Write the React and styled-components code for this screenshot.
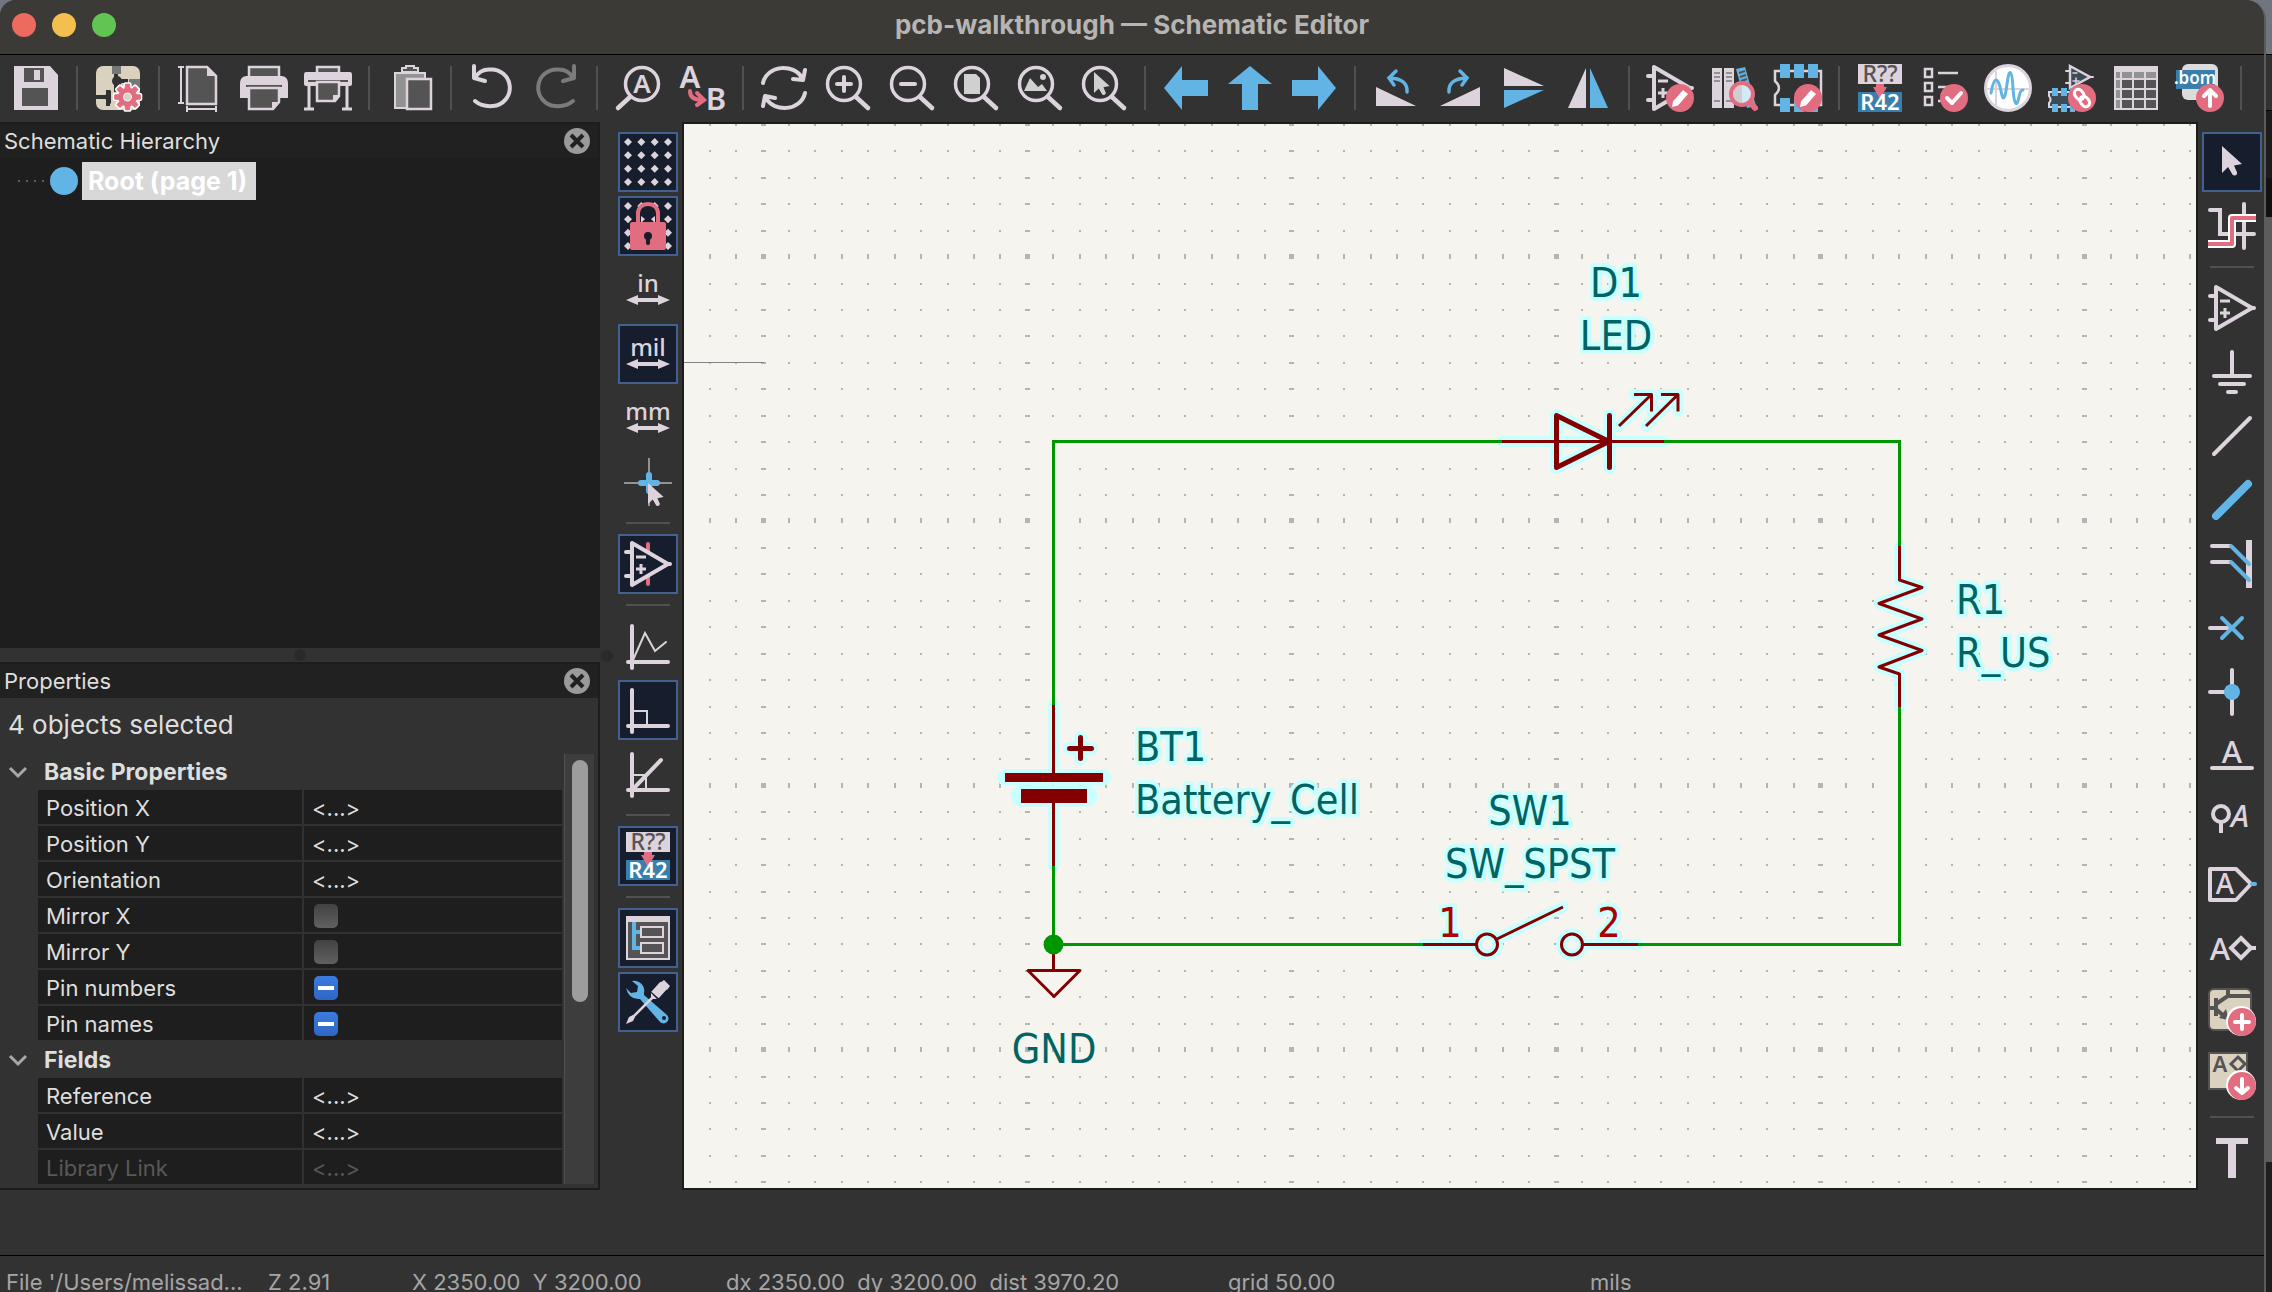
import React, { useEffect, useRef } from 'react';
import styled, { createGlobalStyle } from 'styled-components';

const L = '#dcd3dd';
const G = '#545454';
const BLUE = '#62b4e4';
const DEEP = '#397fae';
const PINK = '#e26d80';
const CREAM = '#dad1bf';
const DARK = '#323232';

const GlobalStyle = createGlobalStyle`
  * { box-sizing: border-box; }
  body { margin: 0; background: #222; overflow: hidden; }
  button { font: inherit; color: inherit; }
`;

const Desktop = styled.div`
  display: flex;
  height: 100vh;
  font-family: Inter, "Liberation Sans", sans-serif;
  background: linear-gradient(#70757f 0 54px, #000 54px 55px, #323232 55px 110px, #000 110px 111px,
    #1c1c1c 111px 178px, #111 178px 217px, #5c5c5c 217px 1162px, #1f1f1f 1162px);
`;

const Window = styled.div`
  flex: 1;
  min-width: 0;
  display: flex;
  flex-direction: column;
  margin-right: 6px;
  border-right: 2px solid #5b5b5a;
  border-radius: 16px 20px 0 0;
  background: #323232;
  overflow: hidden;
`;

const TitleBar = styled.header`
  flex: none;
  display: grid;
  grid-template-columns: 1fr auto 1fr;
  align-items: center;
  height: 55px;
  padding: 0 12px 4px;
  background: #3b3a37;
  border-bottom: 1px solid #000;
`;

const Lights = styled.div`
  display: flex;
  gap: 16px;
`;

const Light = styled.button`
  width: 24px;
  height: 24px;
  padding: 0;
  border: 0;
  border-radius: 50%;
  background: ${(p) => p.$color};
`;

const Title = styled.h1`
  margin: 0;
  font-size: 26px;
  line-height: 32px;
  font-weight: 700;
  color: #b6b5b4;
`;

const TopToolbar = styled.nav`
  flex: none;
  display: flex;
  align-items: center;
  height: 67px;
  padding: 0 0 1px 4px;
  overflow: hidden;
`;

const TopButton = styled.button`
  flex: none;
  display: flex;
  align-items: center;
  justify-content: center;
  width: 64px;
  height: 60px;
  padding: 0;
  border: 0;
  background: none;
`;

const TopDivider = styled.span`
  flex: none;
  width: 2px;
  height: 44px;
  margin: 0 8px;
  background: #505050;
`;

const Main = styled.main`
  flex: 1;
  min-height: 0;
  display: grid;
  grid-template-columns: 600px 14px 68px minmax(0, 1fr) 66px;
  margin-bottom: 65px;
`;

const SidePanels = styled.aside`
  display: flex;
  flex-direction: column;
  min-height: 0;
`;

const Sash = styled.div`
  flex: 0 0 14px;
  display: flex;
  align-items: center;
  justify-content: center;
  &::after {
    content: '';
    width: 12px;
    height: 12px;
    border-radius: 50%;
    background: #2a2a2a;
  }
`;

const Panel = styled.section`
  flex: 1 1 0;
  min-height: 0;
  display: flex;
  flex-direction: column;
  border: solid #1d1d1d;
  border-width: 2px 2px ${(p) => (p.$footed ? '2px' : '0')} 0;
  background: ${(p) => p.$bg};
`;

const PanelHeader = styled.div`
  flex: none;
  display: flex;
  align-items: center;
  justify-content: space-between;
  height: 34px;
  padding: 0 7px 0 4px;
  background: #212121;
`;

const PanelTitle = styled.h2`
  margin: 0;
  font-size: 22px;
  line-height: 28px;
  font-weight: 400;
  color: #dedede;
`;

const CloseButton = styled.button`
  display: flex;
  padding: 0;
  border: 0;
  background: none;
`;

const Tree = styled.ul`
  margin: 0;
  padding: 4px 0 0 18px;
  list-style: none;
`;

const TreeItem = styled.li`
  display: flex;
  align-items: center;
  height: 38px;
`;

const TreeDots = styled.span`
  width: 26px;
  height: 2px;
  margin-right: 6px;
  background: repeating-linear-gradient(90deg, #5c5c5c 0 2px, transparent 2px 8px);
`;

const SheetDot = styled.span`
  width: 28px;
  height: 28px;
  margin-right: 4px;
  border-radius: 50%;
  background: ${BLUE};
`;

const TreeLabel = styled.span`
  padding: 0 9px 0 6px;
  font-size: 25px;
  line-height: 38px;
  font-weight: 700;
  color: #fff;
  background: #d8d8d8;
`;

const Selection = styled.p`
  flex: none;
  height: 56px;
  margin: 0;
  padding-left: 8px;
  font-size: 26px;
  line-height: 54px;
  color: #dedede;
`;

const GridArea = styled.div`
  flex: 1;
  min-height: 0;
  display: flex;
  margin: 0 4px 4px 0;
  overflow: hidden;
`;

const GridClip = styled.div`
  flex: 1;
  min-width: 0;
  overflow: hidden;
`;

const PropTable = styled.table`
  width: 100%;
  border-collapse: separate;
  border-spacing: 0;
  table-layout: fixed;
  font-size: 22px;
  line-height: 32px;
  color: #dedede;
`;

const GroupCell = styled.th`
  height: 36px;
  padding: 0 0 0 6px;
  text-align: left;
  font-size: 23px;
  font-weight: 700;
`;

const GroupToggle = styled.button`
  display: flex;
  align-items: center;
  gap: 14px;
  height: 36px;
  padding: 0;
  border: 0;
  background: none;
`;

const Gutter = styled.td`
  width: 38px;
  padding: 0;
`;

const NameCell = styled.th`
  width: 266px;
  height: 36px;
  padding: 2px 0 0 8px;
  text-align: left;
  font-weight: 400;
  color: ${(p) => (p.$dim ? '#585858' : '#dedede')};
  background: #1e1e1e;
  border-right: 2px solid #313131;
  border-bottom: 2px solid #313131;
`;

const ValueCell = styled.td`
  padding: 2px 0 0 8px;
  color: ${(p) => (p.$dim ? '#585858' : '#dedede')};
  background: #1e1e1e;
  border-bottom: 2px solid #313131;
`;

const CheckBox = styled.input`
  appearance: none;
  display: block;
  width: 24px;
  height: 24px;
  margin: 0 0 0 2px;
  border-radius: 5px;
  background: linear-gradient(#424242, #606060);
  &:indeterminate {
    background:
      linear-gradient(#fff, #fff) center / 16px 4px no-repeat,
      linear-gradient(#3c7be0, #2e66c4);
  }
`;

const ScrollTrack = styled.div`
  width: 30px;
  margin-left: 2px;
  padding: 6px 6px 0 7px;
  background: #3d3d3d;
  border-left: 1px solid #505050;
`;

const ScrollThumb = styled.div`
  width: 16px;
  height: 57%;
  border-radius: 8px;
  background: #9d9d9d;
`;

const SideToolbar = styled.nav`
  display: flex;
  flex-direction: column;
  align-items: flex-start;
  padding: 8px 0 0 2px;
`;

const SideButton = styled.button`
  flex: none;
  display: flex;
  align-items: center;
  justify-content: center;
  width: 60px;
  height: 60px;
  margin: 2px;
  padding: 0;
  border: 2px solid ${(p) => (p['aria-pressed'] ? '#436190' : 'transparent')};
  background: ${(p) => (p['aria-pressed'] ? '#161e2d' : 'none')};
`;

const SideDivider = styled.span`
  flex: none;
  width: 44px;
  height: 2px;
  margin: 8px 10px;
  background: #505050;
`;

const Canvas = styled.div`
  min-width: 0;
  min-height: 0;
  border: 2px solid #1c1c1b;
  background: #f5f4ef;
  overflow: hidden;
`;

const Drawing = styled.svg`
  display: block;
  width: 100%;
  height: 100%;
`;

const Field = styled.text`
  font-family: "DejaVu Sans Condensed", "DejaVu Sans", sans-serif;
  font-size: 41px;
  fill: ${(p) => p.$fill || '#006464'};
  text-anchor: ${(p) => p.$anchor || 'middle'};
  stroke: ${(p) => (p.$plain ? 'none' : '#c8ffff')};
  stroke-width: 8px;
  stroke-linejoin: round;
  paint-order: stroke;
`;

const StatusBar = styled.footer`
  flex: none;
  display: grid;
  grid-template-columns: 262px 144px 314px 502px 362px 1fr;
  height: 37px;
  padding: 16px 0 0 6px;
  border-top: 1px solid #000;
  font-size: 22px;
  line-height: 20px;
  color: #a5a5a5;
  white-space: pre;
`;

const StatusField = styled.div`
  height: 20px;
`;

const IconSvg = styled.svg`
  overflow: visible;
`;

const IconText = styled.text`
  font-family: "Noto Sans", sans-serif;
  font-size: ${(p) => p.$size}px;
  font-weight: ${(p) => p.$weight || 400};
  font-style: ${(p) => (p.$italic ? 'italic' : 'normal')};
  text-anchor: middle;
  fill: ${(p) => p.$fill || L};
`;

/* ---------- icons, all on a 48 px grid ---------- */

const Icon = ({ children }) => (
  <IconSvg width="48" height="48" viewBox="0 0 48 48" fill="none" strokeLinecap="round" aria-hidden="true">
    {children}
  </IconSvg>
);

const Badge = ({ children, y = 34, ring }) => (
  <>
    {ring && <circle cx="33" cy={y - 1} r="15" fill="#fff" />}
    <circle cx="34" cy={y} r="14" fill={PINK} />
    <g transform={`translate(34 ${y})`} stroke="#fff" strokeWidth="4" strokeLinejoin="round">
      {children}
    </g>
  </>
);

const Pencil = () => <path d="M-7 3.500L3 -8L8 -4L-2 7.500L-8 9Z" fill="#fff" stroke="none" />;

const OpAmp = ({ fill = 'none' }) => (
  <>
    <path d="M8 3V45L44 24Z" stroke={L} strokeWidth="4" strokeLinejoin="round" fill={fill} />
    <path d="M2 12H7M2 36H7M42 24H46" stroke={L} strokeWidth="4" />
    <path d="M12 17H22M12 29H22M17 24V34" stroke={L} strokeWidth="3" strokeLinecap="butt" />
  </>
);

const Lens = ({ children }) => (
  <>
    <circle cx="20" cy="20" r="16.500" stroke={L} strokeWidth="3.500" />
    <path d="M32 33L44 44" stroke={L} strokeWidth="4.500" />
    {children}
  </>
);

const Pointer = ({ x, y, fill = L, s = 1 }) => (
  <g transform={`translate(${x} ${y}) scale(${s})`}>
    <path d="M0 0V27L6 21L11 29L15 27L12 19.500L20 18Z" fill={fill} />
    <path d="M9 20L12.500 27" stroke={fill} strokeWidth="5" />
  </g>
);

const Annotate = () => (
  <>
    <path d="M2 0H46V20H2Z" fill={L} />
    <path d="M2 28H46V48H2Z" fill={DEEP} />
    <IconText x="24" y="18" $size={23} $weight={500} $fill={G}>R??</IconText>
    <path d="M20 20H28V23H31L24 35L17 23H20Z" fill={PINK} />
    <IconText x="24" y="46" $size={22} $weight={600} $fill="#fff">R42</IconText>
  </>
);

const GridDots = () => {
  const at = [4, 17.3, 30.7, 44];
  return at.map((y) => at.map((x) => <path key={`${x}-${y}`} d={`M${x - 4} ${y}l4 -4l4 4l-4 4z`} fill={L} />));
};

const Units = ({ children }) => (
  <>
    <IconText x="24" y="26" $size={24} $weight={500}>{children}</IconText>
    <path d="M2 34L14 29V32H34V29L46 34L34 39V36H14V39Z" fill={L} />
  </>
);

const Axes = ({ children }) => (
  <>
    {children}
    <path d="M8 4V46M4 40H44" stroke={L} strokeWidth="4" />
  </>
);

const gearPath = (() => {
  const pts = [];
  for (let i = 0; i < 8; i += 1) {
    [[-0.27, 9], [-0.16, 13], [0.16, 13], [0.27, 9]].forEach(([o, r]) => {
      const a = (i * Math.PI) / 4 + o;
      pts.push(`${(33.5 + r * Math.sin(a)).toFixed(2)} ${(33 - r * Math.cos(a)).toFixed(2)}`);
    });
  }
  return `M${pts.join('L')}Z`;
})();

const icons = {
  save: (
    <>
      <path d="M2 2H38L46 11V46H2Z" fill={L} />
      <path d="M12 4H32V18H12ZM10 24H36V42H10Z" fill={G} />
      <path d="M22 6H28V16H22Z" fill={L} />
    </>
  ),
  setup: (
    <>
      <rect x="2" y="2" width="44" height="44" rx="7" fill={CREAM} />
      <path d="M18 2H27V10H18ZM35 15H46V24H35Z" fill="#777" />
      <circle cx="23" cy="17" r="5" fill={DARK} />
      <path d="M22 10V28M23 17H34M2 33H12M14 26V42" stroke={DARK} strokeWidth="4" strokeLinecap="butt" />
      <path d="M9 33L17 26V40Z" fill={DARK} />
      <path d={gearPath} fill={PINK} stroke="#fff" strokeWidth="4" strokeLinejoin="round" />
      <path d={gearPath} fill={PINK} stroke={PINK} strokeWidth="1" strokeLinejoin="round" />
      <circle cx="33.500" cy="33" r="4" fill={CREAM} stroke="#fff" strokeWidth="1" />
    </>
  ),
  page: (
    <>
      <path d="M11 3H31L40 12V40H11Z" fill={G} stroke={L} strokeWidth="2.500" />
      <path d="M31 2V12H41Z" fill={L} />
      <path d="M5 3V39M2 3H8M2 39H8M11 45H40M11 42V48M40 42V48" stroke={L} strokeWidth="2" strokeLinecap="butt" />
    </>
  ),
  print: (
    <>
      <path d="M9 14V3H39V14" fill={G} stroke={L} strokeWidth="2.500" />
      <path d="M6 12H42Q48 13 48 19V34H40V22H8V34H0V19Q0 13 6 12Z" fill={L} />
      <path d="M6 22H42" stroke={G} strokeWidth="2" strokeLinecap="butt" />
      <path d="M9 24V45H33L39 38V24Z" fill={G} stroke={L} strokeWidth="2.500" />
      <path d="M32 46V38H40Z" fill={L} />
    </>
  ),
  plot: (
    <>
      <path d="M13 9V3H35V9" fill={G} stroke={L} strokeWidth="2.500" />
      <path d="M2 8H46Q48 8 48 11V20Q48 22 46 22H2Q0 22 0 20V11Q0 8 2 8Z" fill={L} />
      <path d="M4 17H44" stroke={G} strokeWidth="2" strokeLinecap="butt" />
      <path d="M13 18V37H31L35 32V18Z" fill={G} stroke={L} strokeWidth="2.500" />
      <path d="M29 38V31H36Z" fill={L} />
      <path d="M5 22V45M43 22V45M0 45H10M38 45H48" stroke={L} strokeWidth="3" strokeLinecap="butt" />
    </>
  ),
  paste: (
    <>
      <path d="M9 9H39V44H9Z" fill="#929292" stroke={L} strokeWidth="2" />
      <path d="M16 8V4H20V2H28V4H32V8Z" fill={G} stroke={L} strokeWidth="2" />
      <path d="M21 15H45V45H21Z" fill={G} stroke={L} strokeWidth="2.500" />
    </>
  ),
  undo: <path d="M6 2V14L17 17M7 14Q12 5 22 5.500A18 18 0 0 1 25 42Q14 43 7 37" stroke={L} strokeWidth="4" strokeLinejoin="round" />,
  redo: <path d="M42 2V14L31 17M41 14Q36 5 26 5.500A18 18 0 0 0 23 42Q34 43 41 37" stroke="#7c7b7c" strokeWidth="4" strokeLinejoin="round" />,
  find: (
    <>
      <circle cx="28" cy="20" r="16.500" stroke={L} strokeWidth="3.500" />
      <path d="M16 33L4 44" stroke={L} strokeWidth="4.500" />
      <IconText x="28" y="29" $size={26} $weight={600}>A</IconText>
    </>
  ),
  replace: (
    <>
      <IconText x="12" y="24" $size={31} $weight={600}>A</IconText>
      <IconText x="38" y="46" $size={31} $weight={600}>B</IconText>
      <path d="M12 27Q12 36 24 36M19 29L26 36L19 41" stroke={PINK} strokeWidth="4" />
    </>
  ),
  refresh: <path d="M3 19C7 1 34 -1 42 14M45 6L43 16L33 15M45 29C41 47 14 49 6 34M3 42L5 32L15 34" stroke={L} strokeWidth="4" strokeLinejoin="round" />,
  zoomIn: <Lens><path d="M13 20H27M20 13V27" stroke={L} strokeWidth="4" /></Lens>,
  zoomOut: <Lens><path d="M13 20H27" stroke={L} strokeWidth="4" /></Lens>,
  zoomPage: <Lens><path d="M12 10H24L28 14V30H12Z" fill="#d0d0d0" /></Lens>,
  zoomObjects: <Lens><path d="M8 27L14 14L22 23L26 20L31 27Z" fill="#d0d0d0" /><circle cx="27" cy="13" r="3" fill="#d0d0d0" /></Lens>,
  zoomSelect: <Lens><Pointer x={14} y={8} s={0.78} fill="#d0d0d0" /></Lens>,
  back: <path d="M2 24L20 2V16H46V32H20V46Z" fill={BLUE} />,
  up: <path d="M24 2L46 20H32V46H16V20H2Z" fill={BLUE} />,
  forward: <path d="M46 24L28 2V16H2V32H28V46Z" fill={BLUE} />,
  ccw: <><path d="M4 23V42H44Z" fill={L} /><path d="M35 28Q36 15 18 14M24 7L17 14L22 21" stroke={BLUE} strokeWidth="3.500" /></>,
  cw: <><path d="M44 23V42H4Z" fill={L} /><path d="M13 28Q12 15 30 14M24 7L31 14L26 21" stroke={BLUE} strokeWidth="3.500" /></>,
  mirrorV: <><path d="M4 4V22H44Z" fill={L} /><path d="M4 26H44L4 44Z" fill={BLUE} /></>,
  mirrorH: <><path d="M22 4V44H4Z" fill={L} /><path d="M26 4V44H44Z" fill={BLUE} /></>,
  symbolEdit: <><OpAmp /><Badge><Pencil /></Badge></>,
  library: (
    <>
      <path d="M2 4H12V44H2ZM14 4H24V44H14Z" fill={L} />
      <path d="M4 9H10M4 13H10M4 17H10M4 37H10M16 9H22M16 13H22M16 17H22M16 37H22" stroke="#929292" strokeWidth="2" strokeLinecap="butt" />
      <path d="M26 5L35 3L46 42L37 44Z" fill={BLUE} />
      <path d="M29 9L35 7M30 13L36 11M31 17L37 15" stroke={G} strokeWidth="2" strokeLinecap="butt" />
      <circle cx="32" cy="30" r="11" fill="#d4e9f5" stroke={PINK} strokeWidth="4" />
      <path d="M23 30A9 9 0 0 0 32 39V21A9 9 0 0 0 23 30Z" fill="#d0cdd0" />
      <path d="M41 39L45 44" stroke={PINK} strokeWidth="6" />
    </>
  ),
  footprintEdit: (
    <>
      <path d="M1 7H47V41H1V31Q9 24 1 17Z" stroke={L} strokeWidth="2.500" />
      <path d="M6 0H16V14H6ZM20 0H30V14H20ZM34 0H44V14H34ZM6 34H16V48H6ZM20 34H30V48H20ZM34 34H44V48H34Z" fill={BLUE} />
      <Badge><Pencil /></Badge>
    </>
  ),
  annotate: <Annotate />,
  erc: (
    <>
      <path d="M5 5H12V13H5ZM5 19H12V27H5ZM5 33H12V41H5ZM18 9H38M18 23H30M18 37H24" stroke={L} strokeWidth="2.500" strokeLinecap="butt" />
      <Badge><path d="M-7 0L-2 5L7 -5" /></Badge>
    </>
  ),
  simulate: (
    <>
      <circle cx="24" cy="24" r="22.500" fill="#fff" stroke={L} strokeWidth="3" />
      <path d="M4 25H44M12 8V42" stroke={L} strokeWidth="2" />
      <path d="M7 29C10 12 14 12 17 27C19 38 21 36 23 20C25 4 28 4 29 24C30 41 33 44 35 33C36 27 38 26 39 26" stroke={BLUE} strokeWidth="3" />
    </>
  ),
  assign: (
    <>
      <path d="M22 2V24L42 13Z" fill="#3d4a57" stroke={L} strokeWidth="2.500" />
      <path d="M18 7H22M18 19H22M41 13H45" stroke={L} strokeWidth="2" />
      <path d="M25 9H29M25 17H31M28 14V20" stroke={L} strokeWidth="1.500" />
      <path d="M1 28H28V43H1V39Q4 36 1 32Z" fill="#3d4a57" stroke={L} strokeWidth="2" />
      <path d="M4 24H10V32H4ZM13 24H19V32H13ZM22 24H27V32H22ZM4 40H10V48H4ZM13 40H19V48H13ZM22 40H27V48H22Z" fill={BLUE} />
      <Badge>
        <g strokeWidth="3" transform="rotate(52)">
          <rect x="-10" y="-4" width="11" height="8" rx="4" />
          <rect x="-1" y="-4" width="11" height="8" rx="4" />
        </g>
      </Badge>
    </>
  ),
  table: (
    <>
      <path d="M2 2H46V46H2Z" fill={L} />
      <path d="M4 8H8V14H4ZM10 8H20V14H10ZM22 8H32V14H22ZM34 8H44V14H34ZM4 16H8V24H4ZM4 26H8V34H4ZM4 36H8V44H4Z" fill="#929292" />
      <path d="M10 16H20V24H10ZM22 16H32V24H22ZM34 16H44V24H34ZM10 26H20V34H10ZM22 26H32V34H22ZM34 26H44V34H34ZM10 36H20V44H10ZM22 36H32V44H22ZM34 36H44V44H34Z" fill={G} />
    </>
  ),
  bom: (
    <>
      <rect x="6" y="0" width="36" height="36" rx="6" fill="#dcdcdc" />
      <path d="M0 6H39V25H0Z" fill={DEEP} />
      <IconText x="19" y="20" $size={17} $weight={600} $fill="#fff">.bom</IconText>
      <Badge><path d="M0 8V-8M-6 -2L0 -8L6 -2" /></Badge>
    </>
  ),
  grid: <GridDots />,
  lock: (
    <>
      <GridDots />
      <path d="M14 20V11A10 10 0 0 1 34 11V20Z" fill="#161e2d" />
      <path d="M17 14l4 3l-4 4zM31 14l-4 3l4 4z" fill={L} />
      <path d="M14 21V11A10 9 0 0 1 34 11V21" stroke={PINK} strokeWidth="4" />
      <rect x="6" y="20" width="36" height="28" rx="2" fill={PINK} />
      <circle cx="24" cy="34" r="4" fill="#161e2d" />
      <path d="M24 34V41" stroke="#161e2d" strokeWidth="4" />
    </>
  ),
  inch: <Units>in</Units>,
  mil: <Units>mil</Units>,
  mm: <Units>mm</Units>,
  cursor: (
    <>
      <path d="M0 25H48M25 0V48" stroke="#929292" strokeWidth="2" strokeLinecap="butt" />
      <path d="M17 25H33M25 17V33" stroke={BLUE} strokeWidth="6" />
      <Pointer x={24} y={25} s={0.78} />
    </>
  ),
  hiddenPins: <><path d="M24 4V44" stroke={PINK} strokeWidth="4" /><path d="M8 3V45L44 24Z" fill="#161e2d" /><OpAmp /></>,
  freeAngle: <Axes><path d="M9 38L21 11L31 29L42 20" stroke={L} strokeWidth="2" /></Axes>,
  rightAngle: <Axes><path d="M10 25H23V39" stroke={L} strokeWidth="2" /></Axes>,
  halfAngle: <Axes><path d="M10 25H22V39" stroke={L} strokeWidth="2" /><path d="M10 38L37 10" stroke={L} strokeWidth="4" /></Axes>,
  hierarchy: (
    <>
      <path d="M3 3H45V45H3Z" fill={G} stroke={L} strokeWidth="2" />
      <path d="M2 2H46V8H2Z" fill={L} />
      <path d="M10 8V34H16M10 18H16" stroke={BLUE} strokeWidth="4" strokeLinecap="butt" />
      <path d="M17 13H39V23H17ZM17 29H39V39H17Z" stroke={L} strokeWidth="2" />
    </>
  ),
  tools: (
    <>
      <path d="M8 3A10 10 0 0 1 20 15L20 17L43 37A4 4 0 0 1 36 44L16 21Q5 22 2 10L7 15L13 14L14 8Z" fill={BLUE} />
      <circle cx="40" cy="40" r="2" fill="#161e2d" />
      <path d="M6 42L28 20" stroke={L} strokeWidth="2.500" />
      <path d="M2 46L5 39L9 37L11 39L9 43Z" fill={L} />
      <path d="M31 17L40 7" stroke={L} strokeWidth="10" strokeLinecap="butt" />
      <path d="M36 5L40 2L46 8L43 12ZM27 15L33 21L27 21Z" fill={L} />
    </>
  ),
  select: <Pointer x={14} y={8} />,
  highlight: (
    <>
      <path d="M2 8H12V32H46M36 2V46" stroke={L} strokeWidth="4" />
      <path d="M0 42H24V16H48" stroke="#fff" strokeWidth="8" strokeLinecap="butt" strokeLinejoin="round" />
      <path d="M0 42H24V16H48" stroke={PINK} strokeWidth="4" strokeLinecap="butt" strokeLinejoin="round" />
    </>
  ),
  symbol: <OpAmp />,
  power: <path d="M24 4V28M6 28H42M12 36H36M20 44H28" stroke={L} strokeWidth="4" />,
  wire: <path d="M42 6L6 42" stroke={L} strokeWidth="4" />,
  bus: <path d="M40 8L8 40" stroke={BLUE} strokeWidth="8" />,
  busEntry: (
    <>
      <path d="M4 6H22M4 22H22" stroke={L} strokeWidth="4" />
      <path d="M38 0H44V48H38Z" fill={L} />
      <path d="M23 6L41 24M23 22L41 40" stroke={BLUE} strokeWidth="4" />
    </>
  ),
  noConnect: <><path d="M2 24H24" stroke={L} strokeWidth="4" /><path d="M14 14L34 34M34 14L14 34" stroke={BLUE} strokeWidth="4" /></>,
  junction: <><path d="M2 24H24M24 2V46" stroke={L} strokeWidth="4" /><circle cx="24" cy="24" r="8" fill={BLUE} /></>,
  label: <><IconText x="24" y="31" $size={31} $weight={500}>A</IconText><path d="M4 36H44" stroke={L} strokeWidth="4" /></>,
  netClass: <><circle cx="13" cy="18" r="8" stroke={L} strokeWidth="4" /><path d="M13 26V37" stroke={L} strokeWidth="4" strokeLinecap="butt" /><IconText x="32" y="31" $size={31} $weight={500} $italic>A</IconText></>,
  globalLabel: (
    <>
      <path d="M2 9H28L43 24L28 40H2Z" stroke={L} strokeWidth="4" strokeLinejoin="round" />
      <IconText x="17" y="34" $size={28} $weight={500}>A</IconText>
      <path d="M44 24H47" stroke={BLUE} strokeWidth="4" />
    </>
  ),
  hierLabel: <><IconText x="12" y="36" $size={31} $weight={500}>A</IconText><path d="M33 14L43 24L33 34L23 24Z M43 24H48" stroke={L} strokeWidth="4" strokeLinecap="butt" /></>,
  sheet: (
    <>
      <rect x="1" y="1" width="42" height="41" rx="5" fill={CREAM} stroke={G} strokeWidth="2" />
      <path d="M0 20H8M8 10V28M8 16L20 8V2M20 8H42M9 22L18 30" stroke={G} strokeWidth="4" strokeLinecap="butt" />
      <path d="M11 30L21 32L18 21Z" fill={G} />
      <Badge ring><path d="M-7 0H7M0 -7V7" /></Badge>
    </>
  ),
  importPin: (
    <>
      <path d="M1 1H39V37H1Z" fill={CREAM} stroke={G} strokeWidth="2" />
      <IconText x="12" y="20" $size={22} $weight={600} $fill={G}>A</IconText>
      <path d="M30 5L37 12L30 19L23 12Z" stroke={G} strokeWidth="3" />
      <Badge ring><path d="M0 -7V7M-6 2L0 7L6 2" /></Badge>
    </>
  ),
  text: <path d="M8 4H40V10H28V44H20V10H8Z" fill={L} />,
};

const topTools = [
  ['save', 'Save'], null, ['setup', 'Schematic setup'], null,
  ['page', 'Page settings'], ['print', 'Print'], ['plot', 'Plot'], null, ['paste', 'Paste'], null,
  ['undo', 'Undo'], ['redo', 'Redo'], null, ['find', 'Find'], ['replace', 'Find and replace'], null,
  ['refresh', 'Refresh'], ['zoomIn', 'Zoom in'], ['zoomOut', 'Zoom out'], ['zoomPage', 'Zoom to page'],
  ['zoomObjects', 'Zoom to objects'], ['zoomSelect', 'Zoom to selection'], null,
  ['back', 'Back'], ['up', 'Up'], ['forward', 'Forward'], null,
  ['ccw', 'Rotate counterclockwise'], ['cw', 'Rotate clockwise'], ['mirrorV', 'Mirror vertically'], ['mirrorH', 'Mirror horizontally'], null,
  ['symbolEdit', 'Symbol editor'], ['library', 'Symbol libraries'], ['footprintEdit', 'Footprint editor'], null,
  ['annotate', 'Annotate'], ['erc', 'Rules check'], ['simulate', 'Simulator'], ['assign', 'Assign footprints'],
  ['table', 'Edit fields'], ['bom', 'Bill of materials'], null,
];

const leftTools = [
  ['grid', 'Show grid', true], ['lock', 'Grid overrides', true], ['inch', 'Inches'], ['mil', 'Mils', true],
  ['mm', 'Millimeters'], ['cursor', 'Full-window crosshairs'], null, ['hiddenPins', 'Show hidden pins', true], null,
  ['freeAngle', 'Free angle'], ['rightAngle', 'Right angle', true], ['halfAngle', '45 degree angle'], null,
  ['annotate', 'Annotate automatically', true], null, ['hierarchy', 'Hierarchy navigator', true], ['tools', 'Properties manager', true],
];

const rightTools = [
  ['select', 'Select', true], ['highlight', 'Highlight net'], null, ['symbol', 'Add symbol'], ['power', 'Add power'],
  ['wire', 'Add wire'], ['bus', 'Add bus'], ['busEntry', 'Add bus entry'], ['noConnect', 'Add no-connect'],
  ['junction', 'Add junction'], ['label', 'Add label'], ['netClass', 'Add net class'], ['globalLabel', 'Add global label'],
  ['hierLabel', 'Add hierarchical label'], ['sheet', 'Add sheet'], ['importPin', 'Import sheet pin'], null, ['text', 'Add text'],
];

const SideTools = ({ tools, label }) => (
  <SideToolbar aria-label={label}>
    {tools.map((t, i) =>
      t ? (
        <SideButton key={t[0]} type="button" aria-label={t[1]} aria-pressed={Boolean(t[2])}>
          <Icon>{icons[t[0]]}</Icon>
        </SideButton>
      ) : (
        <SideDivider key={`d${i}`} />
      ),
    )}
  </SideToolbar>
);

const Close = ({ label }) => (
  <CloseButton type="button" aria-label={label}>
    <svg width="28" height="28" viewBox="0 0 28 28" aria-hidden="true">
      <circle cx="14" cy="14" r="13" fill="#9a9a9a" />
      <path d="M8 8L20 20M20 8L8 20" stroke="#212121" strokeWidth="4" />
    </svg>
  </CloseButton>
);

const Check = ({ mixed, id }) => {
  const ref = useRef(null);
  useEffect(() => {
    ref.current.indeterminate = Boolean(mixed);
  }, [mixed]);
  return <CheckBox ref={ref} id={id} type="checkbox" />;
};

const groups = [
  {
    name: 'Basic Properties',
    rows: [
      ['Position X'], ['Position Y'], ['Orientation'], ['Mirror X', 'off'], ['Mirror Y', 'off'],
      ['Pin numbers', 'mixed'], ['Pin names', 'mixed'],
    ],
  },
  { name: 'Fields', rows: [['Reference'], ['Value'], ['Library Link', 'dim']] },
];

const NameCol = styled.col`
  width: ${(p) => p.$w};
`;

const Properties = () => (
  <PropTable>
    <colgroup>
      <NameCol $w="38px" />
      <NameCol $w="266px" />
      <NameCol $w="auto" />
    </colgroup>
    {groups.map((g) => (
      <tbody key={g.name}>
        <tr>
          <GroupCell colSpan={3} scope="rowgroup">
            <GroupToggle type="button" aria-expanded="true">
              <svg width="24" height="24" viewBox="0 0 24 24" fill="none" aria-hidden="true">
                <path d="M4 8L12 16L20 8" stroke="#a8a8a8" strokeWidth="3" />
              </svg>
              {g.name}
            </GroupToggle>
          </GroupCell>
        </tr>
        {g.rows.map(([name, kind]) => {
          const id = name.toLowerCase().replace(' ', '-');
          const isCheck = kind === 'off' || kind === 'mixed';
          return (
            <tr key={name}>
              <Gutter />
              <NameCell scope="row" $dim={kind === 'dim'}>
                {isCheck ? <label htmlFor={id}>{name}</label> : name}
              </NameCell>
              <ValueCell $dim={kind === 'dim'}>
                {isCheck ? <Check id={id} mixed={kind === 'mixed'} /> : '<...>'}
              </ValueCell>
            </tr>
          );
        })}
      </tbody>
    ))}
  </PropTable>
);

/* ---------- schematic ---------- */

const PITCH = 26.436;
const gridPath = (() => {
  let d = '';
  for (let r = -5; r < 36; r += 1) {
    for (let c = -3; c < 55; c += 1) {
      const w = c % 10 === 0 ? 5 : 2;
      const h = r % 10 === 0 ? 5 : 2;
      const x = Math.floor(763.5 + c * PITCH - 1.5) - (w === 5 ? 1 : 0);
      const y = Math.floor(256.6 + r * PITCH) - (h === 5 ? 2 : 0);
      d += `M${x} ${y}h${w}v${h}h-${w}z`;
    }
  }
  return d;
})();

const SYMBOLS = [
  { d: 'M1053.5 705V775M1053.5 803V866M1423 944.5H1476M1583 944.5H1638M1502 441.5H1664M1899.5 546V580L1922 587.5L1879 603.500L1922 619L1879 635L1922 650.500L1879 667L1899.500 674V707', w: 3 },
  { d: 'M1619 426L1651.500 394.500M1634 394.500H1651.500V411.500M1646 426L1678 394.500M1661 394.500H1678V411.500M1497 939L1563 907', w: 3 },
  { d: 'M1476.500 944.500a10.500 10.500 0 1 0 21 0a10.500 10.500 0 1 0 -21 0M1561.500 944.500a10.500 10.500 0 1 0 21 0a10.500 10.500 0 1 0 -21 0', w: 3 },
  { d: 'M1556.500 415.500V467.500L1609 441.500ZM1609.500 415.500V467.500M1069.500 748.500H1091.500M1080.500 737.500V758.500', w: 5 },
  { d: 'M1005 777.500H1103', w: 9, butt: true },
  { d: 'M1021 796H1087', w: 14, butt: true },
];

const Schematic = () => (
  <Drawing role="img" aria-label="Schematic">
    <g transform="translate(-684 -124)" fill="none">
      <path d={gridPath} fill="#b4b4b2" shapeRendering="crispEdges" />
      <path d="M684 362.500H764" stroke="#848484" />
      <g stroke="#c8ffff" strokeLinecap="round" strokeLinejoin="round">
        {SYMBOLS.map((s) => (
          <path key={s.d} d={s.d} strokeWidth={s.w + (s.butt ? 7 : 8)} />
        ))}
      </g>
      <path d="M1053.500 705V441.500H1502M1664 441.500H1899.500V546M1899.500 707V944.500H1638M1423 944.500H1053.500V866" stroke="#009600" strokeWidth="3" />
      <g stroke="#840000" strokeLinejoin="round">
        {SYMBOLS.map((s) => (
          <path key={s.d} d={s.d} strokeWidth={s.w} strokeLinecap={s.w === 5 ? 'round' : 'butt'} />
        ))}
        <path d="M1053.500 945V970.500M1028 970.500H1080L1054 996.500Z" strokeWidth="3" />
      </g>
      <circle cx="1053.500" cy="944.500" r="10" fill="#009600" />
      <Field x="1616" y="297">D1</Field>
      <Field x="1616" y="350">LED</Field>
      <Field x="1956" y="614" $anchor="start">R1</Field>
      <Field x="1956" y="667" $anchor="start">R_US</Field>
      <Field x="1135" y="761" $anchor="start">BT1</Field>
      <Field x="1135" y="814" $anchor="start">Battery_Cell</Field>
      <Field x="1530" y="825">SW1</Field>
      <Field x="1530" y="878">SW_SPST</Field>
      <Field x="1054" y="1063" $plain>GND</Field>
      <Field x="1450" y="937" $fill="#a90000">1</Field>
      <Field x="1609" y="937" $fill="#a90000">2</Field>
    </g>
  </Drawing>
);

export default function App() {
  return (
    <Desktop>
      <GlobalStyle />
      <Window>
        <TitleBar>
          <Lights>
            <Light type="button" aria-label="Close" $color="#ec6a5e" />
            <Light type="button" aria-label="Minimize" $color="#f4bf4f" />
            <Light type="button" aria-label="Zoom" $color="#61c554" />
          </Lights>
          <Title>pcb-walkthrough — Schematic Editor</Title>
        </TitleBar>
        <TopToolbar aria-label="Main toolbar">
          {topTools.map((t, i) =>
            t ? (
              <TopButton key={t[0]} type="button" aria-label={t[1]}>
                <Icon>{icons[t[0]]}</Icon>
              </TopButton>
            ) : (
              <TopDivider key={`d${i}`} />
            ),
          )}
        </TopToolbar>
        <Main>
          <SidePanels>
            <Panel $bg="#1e1e1e">
              <PanelHeader>
                <PanelTitle>Schematic Hierarchy</PanelTitle>
                <Close label="Close hierarchy" />
              </PanelHeader>
              <Tree>
                <TreeItem>
                  <TreeDots />
                  <SheetDot />
                  <TreeLabel>Root (page 1)</TreeLabel>
                </TreeItem>
              </Tree>
            </Panel>
            <Sash />
            <Panel $bg="#323232" $footed>
              <PanelHeader>
                <PanelTitle>Properties</PanelTitle>
                <Close label="Close properties" />
              </PanelHeader>
              <Selection>4 objects selected</Selection>
              <GridArea>
                <GridClip>
                  <Properties />
                </GridClip>
                <ScrollTrack>
                  <ScrollThumb />
                </ScrollTrack>
              </GridArea>
            </Panel>
          </SidePanels>
          <Sash />
          <SideTools tools={leftTools} label="Display options" />
          <Canvas>
            <Schematic />
          </Canvas>
          <SideTools tools={rightTools} label="Drawing tools" />
        </Main>
        <StatusBar>
          <StatusField>File '/Users/melissad...</StatusField>
          <StatusField>Z 2.91</StatusField>
          <StatusField>{'X 2350.00  Y 3200.00'}</StatusField>
          <StatusField>{'dx 2350.00  dy 3200.00  dist 3970.20'}</StatusField>
          <StatusField>grid 50.00</StatusField>
          <StatusField>mils</StatusField>
        </StatusBar>
      </Window>
    </Desktop>
  );
}
